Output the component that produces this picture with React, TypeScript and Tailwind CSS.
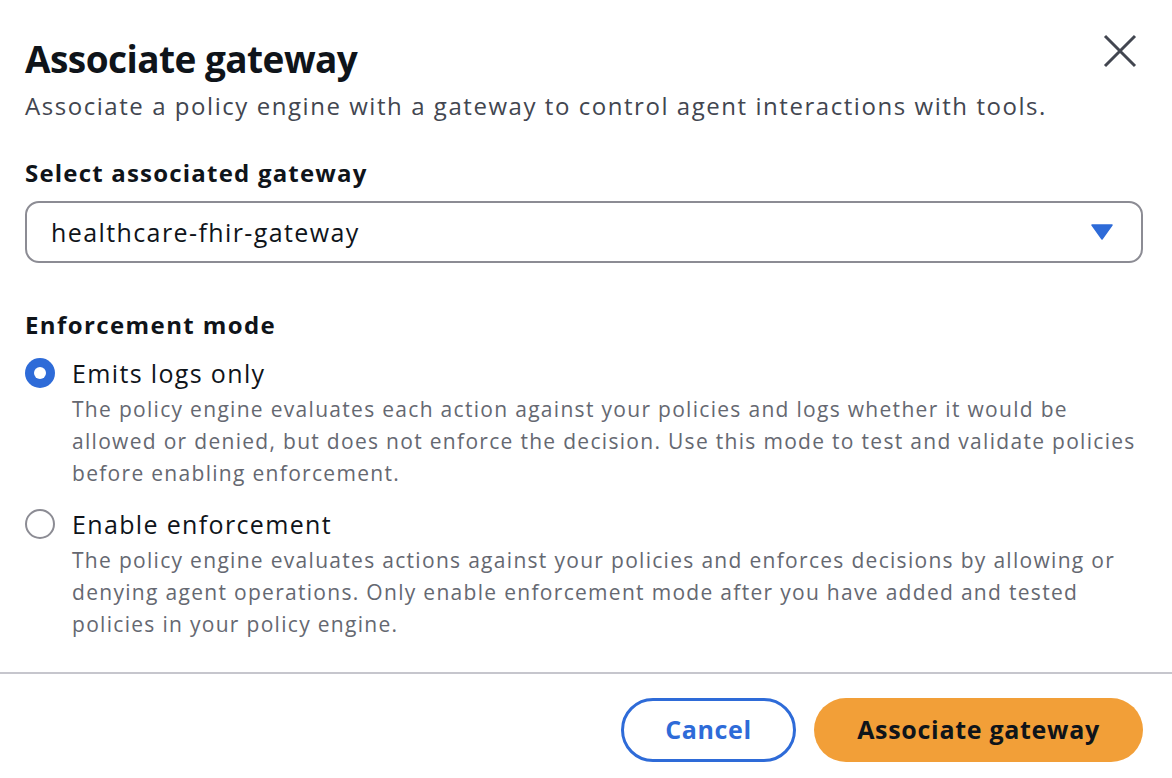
import { useState } from "react";

// Modal content: associate a policy engine with a gateway.

const MODES = [
  {
    id: "logs",
    label: "Emits logs only",
    desc: "The policy engine evaluates each action against your policies and logs whether it would be allowed or denied, but does not enforce the decision. Use this mode to test and validate policies before enabling enforcement.",
  },
  {
    id: "enforce",
    label: "Enable enforcement",
    desc: "The policy engine evaluates actions against your policies and enforces decisions by allowing or denying agent operations. Only enable enforcement mode after you have added and tested policies in your policy engine.",
  },
];

export default function App() {
  const [mode, setMode] = useState("logs");

  return (
    <div className="h-[778px] w-[1172px] overflow-hidden bg-white font-['Open_Sans',sans-serif] text-[#0f141a]">
      <header className="flex items-start justify-between pl-[25px] pr-[34px] pt-[36px]">
        <div>
          <h1 className="text-[37px] font-bold leading-[46px] tracking-[-0.55px]">
            Associate gateway
          </h1>
          <p className="mt-[7px] text-[24px] leading-[34px] tracking-[1.55px] text-[#424650]">
            Associate a policy engine with a gateway to control agent interactions with tools.
          </p>
        </div>
        <button className="mt-[-3px] p-0 text-[#424650]" aria-label="Close">
          <svg width="36" height="36" viewBox="0 0 36 36" fill="none">
            <path d="M3 3 L33 33 M33 3 L3 33" stroke="currentColor" strokeWidth="3" />
          </svg>
        </button>
      </header>

      <section className="pl-[25px] pr-[29px]">
        <label className="mt-[33px] block text-[24px] font-bold leading-[34px] tracking-[1.2px]">
          Select associated gateway
        </label>
        <div className="mt-[11px] flex h-[62px] items-center justify-between rounded-[14px] border-2 border-[#8c8c94] pl-[24px] pr-[28px]">
          <span className="text-[25px] leading-[34px] tracking-[1.4px]">healthcare-fhir-gateway</span>
          <svg width="22" height="16" viewBox="0 0 22 16">
            <path d="M1 1 H21 L11 15 Z" fill="#2e6bd8" stroke="#2e6bd8" strokeWidth="1.5" strokeLinejoin="round" />
          </svg>
        </div>

        <div className="mt-[45px] text-[24px] font-bold leading-[34px] tracking-[1.4px]">
          Enforcement mode
        </div>

        <div className="mt-[14px] flex flex-col gap-[18px]">
          {MODES.map((m) => {
            const on = mode === m.id;
            return (
              <div key={m.id} className="flex cursor-pointer gap-[17px]" onClick={() => setMode(m.id)}>
                <span className="mt-[2px] flex h-[30px] w-[30px] shrink-0 items-center justify-center">
                  {on ? (
                    <span className="flex h-[30px] w-[30px] items-center justify-center rounded-full bg-[#2e6bd8]">
                      <span className="h-[12px] w-[12px] rounded-full bg-white" />
                    </span>
                  ) : (
                    <span className="h-[30px] w-[30px] rounded-full border-2 border-[#8c8c94]" />
                  )}
                </span>
                <div>
                  <div className="text-[25px] leading-[34px] tracking-[1.35px]">{m.label}</div>
                  <p className="mt-[3px] text-[21px] leading-[32px] tracking-[1.3px] text-[#656871]">
                    {m.desc}
                  </p>
                </div>
              </div>
            );
          })}
        </div>
      </section>

      <footer className="mt-[32px] flex justify-end gap-[18px] border-t-2 border-[#c6c6cd] pr-[29px] pt-[24px]">
        <button className="h-[64px] w-[175px] rounded-full border-[3px] border-[#2e6bd8] text-[25px] font-bold tracking-[0.6px] text-[#2e6bd8]">
          Cancel
        </button>
        <button className="h-[64px] w-[329px] rounded-full bg-[#f29f38] text-[25px] font-bold tracking-[0.7px] text-[#0f141a]">
          Associate gateway
        </button>
      </footer>
    </div>
  );
}
